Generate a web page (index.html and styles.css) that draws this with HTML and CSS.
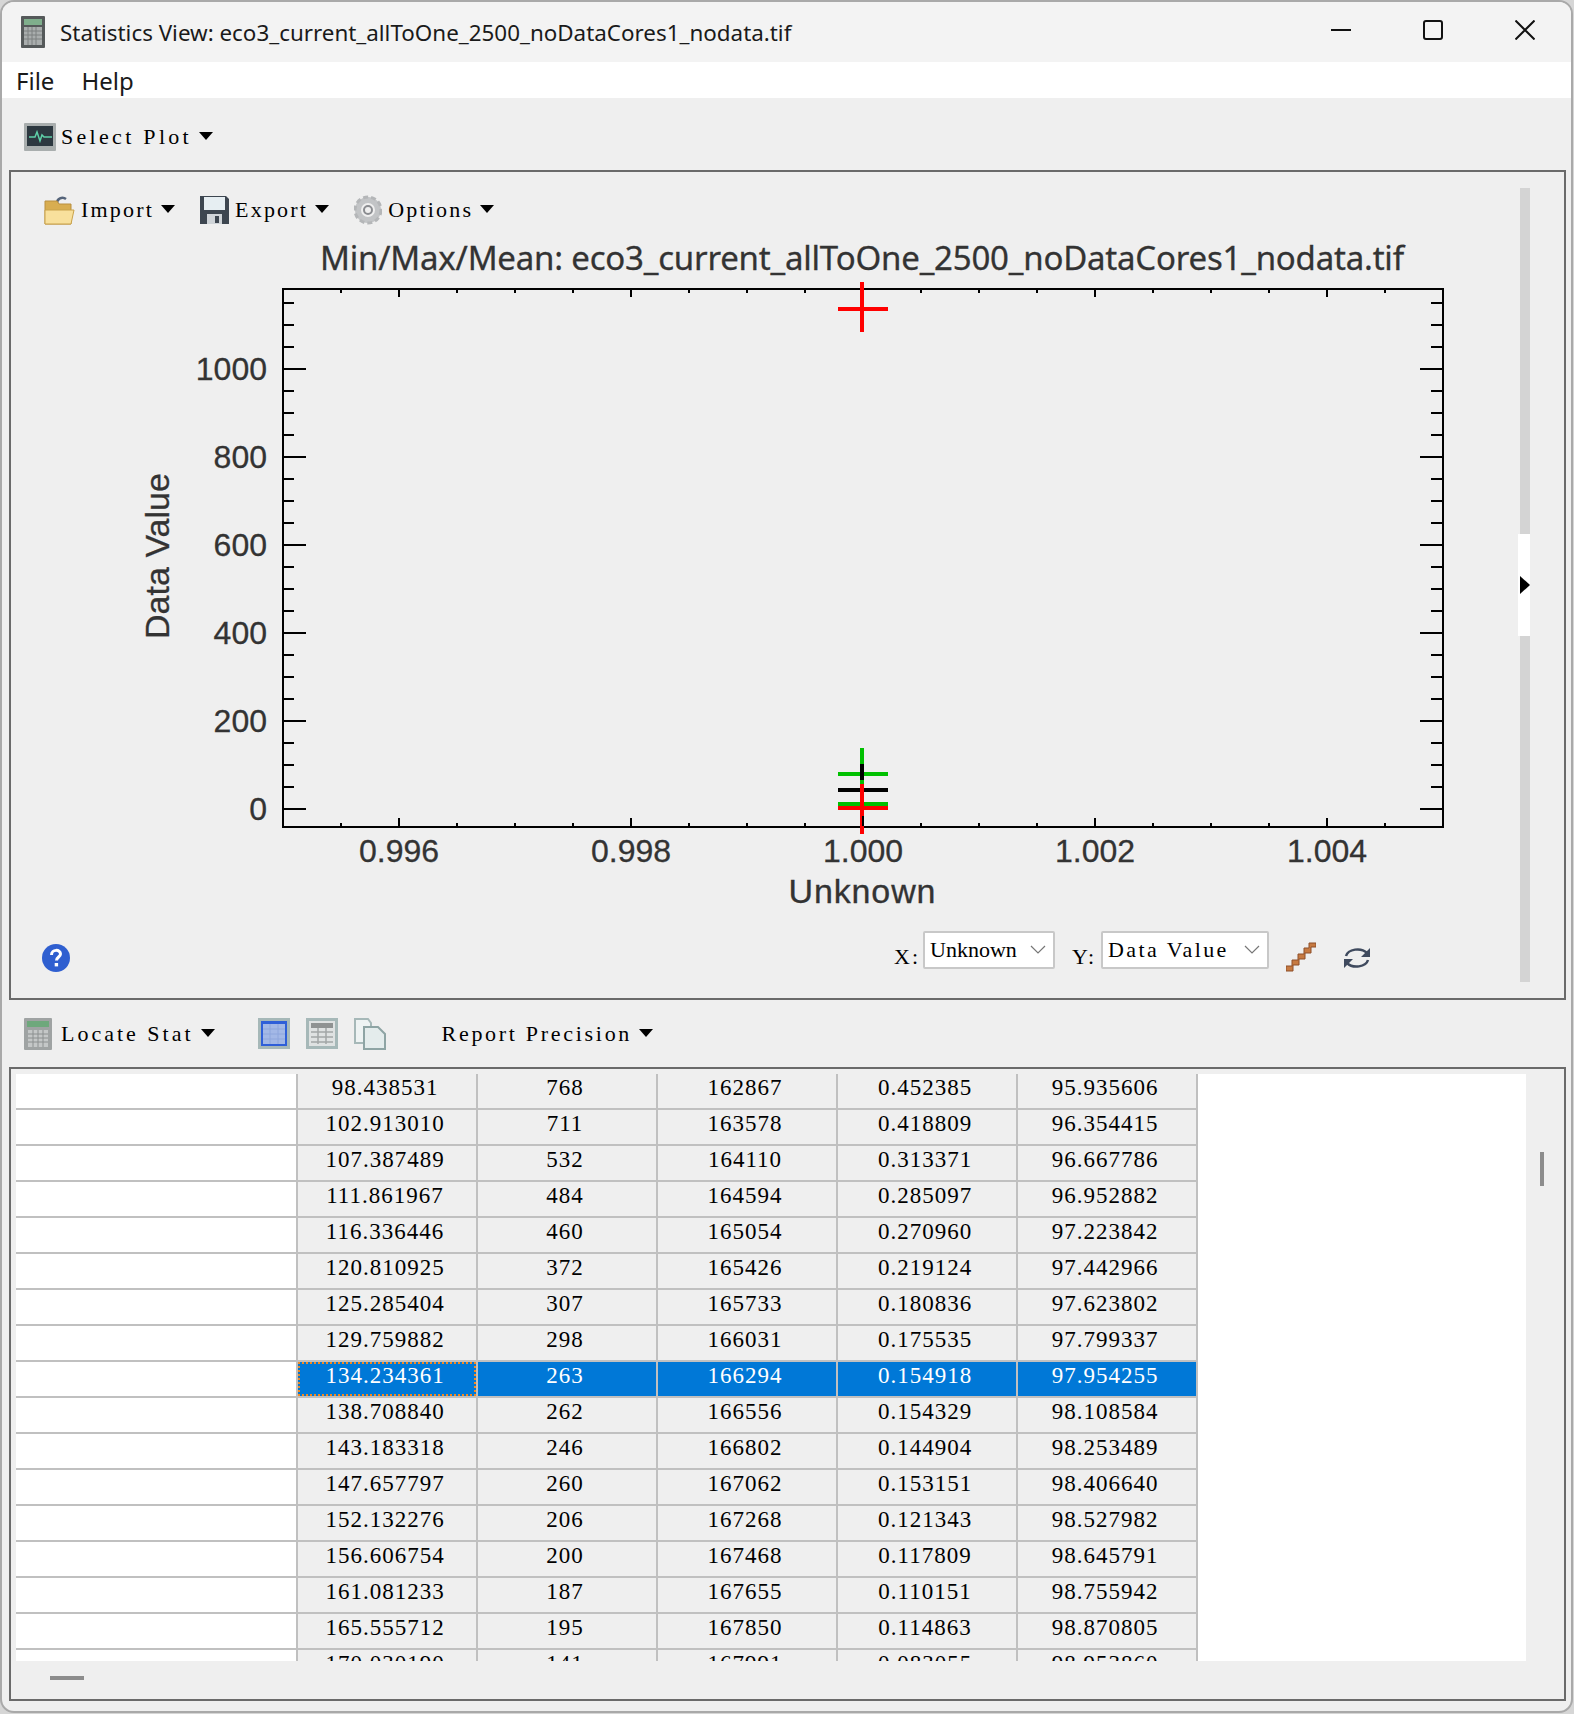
FILE: index.html
```html
<!DOCTYPE html>
<html lang="en">
<head>
    <meta charset="UTF-8">
    <title>Statistics View</title>
    <link rel="stylesheet" href="styles.css">
</head>
<body>
<div class="window">
    <div class="title-bar">
        <svg class="app-icon" width="24" height="32" viewBox="0 0 24 32">
            <rect x="0" y="0" width="24" height="32" rx="1" fill="#55595a"/>
            <rect x="3" y="3" width="18" height="6" fill="#7fae8c"/>
            <rect x="3" y="11" width="18" height="18" fill="#a9adad"/>
            <path d="M3 15h18M3 19h18M3 23h18M7 11v18M11 11v18M15 11v18" stroke="#7c8080" stroke-width="1"/>
        </svg>
        <span class="title-text">Statistics View: eco3_current_allToOne_2500_noDataCores1_nodata.tif</span>
        <div class="win-buttons">
            <svg width="20" height="20" viewBox="0 0 20 20"><path d="M0 10h20" stroke="#111" stroke-width="2"/></svg>
            <svg width="20" height="20" viewBox="0 0 20 20"><rect x="1" y="1" width="18" height="18" rx="2" fill="none" stroke="#111" stroke-width="2"/></svg>
            <svg width="20" height="20" viewBox="0 0 20 20"><path d="M0.5 0.5l19 19M19.5 0.5l-19 19" stroke="#111" stroke-width="2"/></svg>
        </div>
    </div>

    <div class="menu-bar">
        <span>File</span>
        <span>Help</span>
    </div>

    <div class="toolbar toolbar-top">
        <svg class="icon" width="32" height="28" viewBox="0 0 32 28">
            <rect x="0" y="0" width="32" height="28" rx="1" fill="#a9aeae"/>
            <rect x="3" y="3" width="26" height="20" fill="#2d3840"/>
            <path d="M5 14h6l2-5 3 9 2-6 2 2h8" fill="none" stroke="#5fd0a8" stroke-width="1.5"/>
        </svg>
        <span class="bitmap wide">Select Plot</span>
        <span class="caret"></span>
    </div>

    <div class="group plot-group">
        <div class="plot-main">
            <div class="plot-tools">
                <div class="tool">
                    <svg class="icon" width="31" height="30" viewBox="0 0 31 30">
                        <path d="M13 8c0-4 5-7 9-4" fill="none" stroke="#55647a" stroke-width="2.5"/>
                        <path d="M1 6h12l2 3h12v20H1z" fill="#d8ad50" stroke="#b98f3e"/>
                        <path d="M1 15h29l-3 14H1z" fill="#f8e09c" stroke="#c9a24a"/>
                    </svg>
                    <span class="bitmap">Import</span>
                    <span class="caret"></span>
                </div>
                <div class="tool">
                    <svg class="icon" width="29" height="30" viewBox="0 0 29 30">
                        <path d="M0 1h26l3 3v25H0z" fill="#3d4650"/>
                        <rect x="4" y="2" width="21" height="13" fill="#e6eef2"/>
                        <rect x="7" y="19" width="15" height="10" fill="#cfd4d8"/>
                        <rect x="15" y="21" width="4" height="7" fill="#3d4650"/>
                    </svg>
                    <span class="bitmap">Export</span>
                    <span class="caret"></span>
                </div>
                <div class="tool">
                    <svg class="icon" width="28" height="30" viewBox="0 0 28 30">
                        <circle cx="14" cy="15" r="10" fill="none" stroke="#c2c4c6" stroke-width="6"/>
                        <circle cx="14" cy="15" r="13" fill="none" stroke="#b4b6b8" stroke-width="3" stroke-dasharray="5 3"/>
                        <circle cx="14" cy="15" r="4" fill="none" stroke="#8a8c90" stroke-width="2"/>
                    </svg>
                    <span class="bitmap">Options</span>
                    <span class="caret"></span>
                </div>
            </div>

            <svg class="chart" width="1507" height="690" viewBox="11 232 1507 690">
                <text class="chart-title" x="320" y="270" textLength="1084">Min/Max/Mean: eco3_current_allToOne_2500_noDataCores1_nodata.tif</text>
                <rect x="283" y="289" width="1160" height="538" fill="none" stroke="#000" stroke-width="2"/>
                <!-- y axis ticks, left and right -->
                <path class="ticks" d="M283 809h23M283 721h23M283 633h23M283 545h23M283 457h23M283 369h23
                    M283 787h11M283 765h11M283 743h11M283 699h11M283 677h11M283 655h11M283 611h11M283 589h11M283 567h11
                    M283 523h11M283 501h11M283 479h11M283 435h11M283 413h11M283 391h11M283 347h11M283 325h11M283 303h11
                    M1443 809h-23M1443 721h-23M1443 633h-23M1443 545h-23M1443 457h-23M1443 369h-23
                    M1443 787h-12M1443 765h-12M1443 743h-12M1443 699h-12M1443 677h-12M1443 655h-12M1443 611h-12M1443 589h-12M1443 567h-12
                    M1443 523h-12M1443 501h-12M1443 479h-12M1443 435h-12M1443 413h-12M1443 391h-12M1443 347h-12M1443 325h-12M1443 303h-12"/>
                <!-- x axis ticks, top and bottom -->
                <path class="ticks" d="M399 289v8M631 289v8M863 289v8M1095 289v8M1327 289v8
                    M341 289v4M457 289v4M515 289v4M573 289v4M689 289v4M747 289v4M805 289v4M921 289v4M979 289v4M1037 289v4M1153 289v4M1211 289v4M1269 289v4M1385 289v4
                    M399 827v-9M631 827v-9M863 827v-9M1095 827v-9M1327 827v-9
                    M341 827v-4M457 827v-4M515 827v-4M573 827v-4M689 827v-4M747 827v-4M805 827v-4M921 827v-4M979 827v-4M1037 827v-4M1153 827v-4M1211 827v-4M1269 827v-4M1385 827v-4"/>

                <text class="tick-label end" x="267" y="380">1000</text>
                <text class="tick-label end" x="267" y="468">800</text>
                <text class="tick-label end" x="267" y="556">600</text>
                <text class="tick-label end" x="267" y="644">400</text>
                <text class="tick-label end" x="267" y="732">200</text>
                <text class="tick-label end" x="267" y="820">0</text>

                <text class="tick-label mid" x="399" y="862">0.996</text>
                <text class="tick-label mid" x="631" y="862">0.998</text>
                <text class="tick-label mid" x="863" y="862">1.000</text>
                <text class="tick-label mid" x="1095" y="862">1.002</text>
                <text class="tick-label mid" x="1327" y="862">1.004</text>

                <text class="axis-label mid" x="862" y="903" textLength="147">Unknown</text>
                <text class="axis-label mid" transform="translate(169 556) rotate(-90)" textLength="166">Data Value</text>

                <!-- min / max / mean markers -->
                <g shape-rendering="crispEdges">
                    <rect x="860" y="748" width="4" height="36" fill="#00c000"/>
                    <rect x="838" y="772" width="50" height="4" fill="#00c000"/>
                    <rect x="838" y="802" width="50" height="4" fill="#00c000"/>
                    <rect x="860" y="764" width="4" height="16" fill="#000"/>
                    <rect x="838" y="788" width="50" height="4" fill="#000"/>
                    <rect x="860" y="784" width="4" height="50" fill="#f00"/>
                    <rect x="838" y="806" width="50" height="4" fill="#f00"/>
                    <rect x="862" y="816" width="2" height="10" fill="#000"/>
                    <rect x="860" y="282" width="4" height="50" fill="#f00"/>
                    <rect x="838" y="307" width="50" height="4" fill="#f00"/>
                </g>
            </svg>

            <div class="plot-footer">
                <svg class="help-icon" width="28" height="28" viewBox="0 0 28 28">
                    <circle cx="14" cy="14" r="14" fill="#2f5fd0"/>
                    <path d="M9.5 11c0-6 9-6 9-1 0 3-4 3-4 6.5" fill="none" stroke="#fff" stroke-width="3"/>
                    <rect x="12.7" y="19" width="3.4" height="3.4" fill="#fff"/>
                </svg>
                <span class="bitmap axis-name x-name">X:</span>
                <div class="combo combo-x">
                    <span class="bitmap tight">Unknown</span>
                    <svg width="16" height="10" viewBox="0 0 16 10"><path d="M1 1l7 7 7-7" fill="none" stroke="#777" stroke-width="1.2"/></svg>
                </div>
                <span class="bitmap axis-name y-name">Y:</span>
                <div class="combo combo-y">
                    <span class="bitmap">Data Value</span>
                    <svg width="16" height="10" viewBox="0 0 16 10"><path d="M1 1l7 7 7-7" fill="none" stroke="#777" stroke-width="1.2"/></svg>
                </div>
                <svg class="steps-icon" width="30" height="30" viewBox="0 0 30 30">
                    <path d="M0 29v-5h6v-6h6v-6h6V6h5V1h7v4h-5v6h-6v6h-6v6H7v6z" fill="#c67a42" stroke="#8e4f28" stroke-width="1"/>
                </svg>
                <svg class="refresh-icon" width="28" height="22" viewBox="0 0 28 22">
                    <path d="M3 9C5 2 18 0 24 6M25 13C23 20 10 22 4 16" fill="none" stroke="#3f4a5e" stroke-width="2.5"/>
                    <path d="M27 1v9h-9zM1 21v-9h9z" fill="#3f4a5e"/>
                </svg>
            </div>
        </div>

        <div class="plot-side">
            <div class="side-track side-top"></div>
            <div class="side-handle"><span class="side-arrow"></span></div>
            <div class="side-track side-bottom"></div>
        </div>
    </div>

    <div class="toolbar toolbar-mid">
        <svg class="icon" width="28" height="32" viewBox="0 0 28 32">
            <rect x="0" y="0" width="28" height="32" rx="1" fill="#9fa3a3"/>
            <rect x="3" y="3" width="22" height="6" fill="#6ea87c"/>
            <rect x="4" y="12" width="20" height="17" fill="#c4c7c7"/>
            <path d="M4 16h20M4 20h20M4 24h20M9 12v17M14 12v17M19 12v17" stroke="#8c9090"/>
        </svg>
        <span class="bitmap wide">Locate Stat</span>
        <span class="caret"></span>
        <svg class="icon view-first" width="32" height="31" viewBox="0 0 32 31">
            <rect width="32" height="31" fill="#a6b8b8"/>
            <rect x="3" y="3" width="26" height="25" fill="#2f5fd8"/>
            <rect x="5" y="6" width="22" height="20" fill="#a3b8e6"/>
            <path d="M5 11h22M5 16h22M5 21h22M12 6v20M20 6v20" stroke="#8ea6dc"/>
        </svg>
        <svg class="icon" width="32" height="31" viewBox="0 0 32 31">
            <rect width="32" height="31" fill="#a6b8b8"/>
            <rect x="3" y="3" width="26" height="25" fill="#dfe2e2"/>
            <rect x="5" y="5" width="22" height="5" fill="#8f9292"/>
            <path d="M5 14h22M5 19h22M5 24h22M12 10v16M20 10v16" stroke="#a3a6a6" stroke-width="1.5"/>
        </svg>
        <svg class="icon" width="32" height="32" viewBox="0 0 32 32">
            <path d="M1 1h13l3 4v20H1z" fill="#eef3f3" stroke="#a6b8b8" stroke-width="2"/>
            <path d="M10 9h14l7 7v15H10z" fill="#e4ecec" stroke="#8ea4a4" stroke-width="2"/>
        </svg>
        <span class="bitmap report-label">Report Precision</span>
        <span class="caret"></span>
    </div>

    <div class="group table-group">
        <div class="table-row">
            <div class="table-view">
                <table class="stats">
                    <colgroup><col class="c-first"><col><col><col><col><col></colgroup>
                    <tr><td></td><td>98.438531</td><td>768</td><td>162867</td><td>0.452385</td><td>95.935606</td></tr>
                    <tr><td></td><td>102.913010</td><td>711</td><td>163578</td><td>0.418809</td><td>96.354415</td></tr>
                    <tr><td></td><td>107.387489</td><td>532</td><td>164110</td><td>0.313371</td><td>96.667786</td></tr>
                    <tr><td></td><td>111.861967</td><td>484</td><td>164594</td><td>0.285097</td><td>96.952882</td></tr>
                    <tr><td></td><td>116.336446</td><td>460</td><td>165054</td><td>0.270960</td><td>97.223842</td></tr>
                    <tr><td></td><td>120.810925</td><td>372</td><td>165426</td><td>0.219124</td><td>97.442966</td></tr>
                    <tr><td></td><td>125.285404</td><td>307</td><td>165733</td><td>0.180836</td><td>97.623802</td></tr>
                    <tr><td></td><td>129.759882</td><td>298</td><td>166031</td><td>0.175535</td><td>97.799337</td></tr>
                    <tr class="selected"><td></td><td class="focused"><div class="focus-cell">134.234361</div></td><td>263</td><td>166294</td><td>0.154918</td><td>97.954255</td></tr>
                    <tr><td></td><td>138.708840</td><td>262</td><td>166556</td><td>0.154329</td><td>98.108584</td></tr>
                    <tr><td></td><td>143.183318</td><td>246</td><td>166802</td><td>0.144904</td><td>98.253489</td></tr>
                    <tr><td></td><td>147.657797</td><td>260</td><td>167062</td><td>0.153151</td><td>98.406640</td></tr>
                    <tr><td></td><td>152.132276</td><td>206</td><td>167268</td><td>0.121343</td><td>98.527982</td></tr>
                    <tr><td></td><td>156.606754</td><td>200</td><td>167468</td><td>0.117809</td><td>98.645791</td></tr>
                    <tr><td></td><td>161.081233</td><td>187</td><td>167655</td><td>0.110151</td><td>98.755942</td></tr>
                    <tr><td></td><td>165.555712</td><td>195</td><td>167850</td><td>0.114863</td><td>98.870805</td></tr>
                    <tr><td></td><td>170.030190</td><td>141</td><td>167991</td><td>0.083055</td><td>98.953860</td></tr>
                </table>
            </div>
            <div class="v-slider"></div>
        </div>
        <div class="h-slider"></div>
    </div>
</div>
</body>
</html>
```

FILE: styles.css
```css
* {
    box-sizing: border-box;
}

body {
    margin: 0;
    background: #d6d6d6;
}

.window {
    width: 1573px;
    height: 1713px;
    background: #efefef;
    border: 2px solid #a9a9a9;
    border-radius: 14px;
    overflow: hidden;
}

.title-bar {
    height: 60px;
    background: #f3f3f3;
    display: flex;
    align-items: center;
    padding-left: 19px;
    font-family: "Noto Sans", sans-serif;
    font-size: 22.4px;
    color: #1a1a1a;
}

.app-icon {
    margin-right: 15px;
    flex: none;
}

.title-text {
    flex: 1;
    white-space: nowrap;
}

.win-buttons {
    display: flex;
    gap: 72px;
    margin-right: 36px;
    margin-top: -4px;
}

.menu-bar {
    height: 36px;
    background: #fff;
    display: flex;
    align-items: center;
    gap: 27px;
    padding-left: 14px;
    font-family: "Noto Sans", sans-serif;
    font-size: 24px;
    color: #1a1a1a;
}

/* the app draws these labels in a narrow bitmap serif */
.bitmap {
    font-family: "Liberation Serif", serif;
    font-size: 22px;
    letter-spacing: 2.2px;
    color: #000;
    white-space: nowrap;
}

.wide {
    letter-spacing: 3px;
}

.tight {
    letter-spacing: 0;
}

.caret {
    width: 0;
    height: 0;
    border-left: 7px solid transparent;
    border-right: 7px solid transparent;
    border-top: 8px solid #000;
    margin-left: 7px;
    margin-top: -2px;
}

.icon {
    flex: none;
}

.toolbar {
    display: flex;
    align-items: center;
}

.toolbar-top {
    height: 72px;
    padding: 6px 0 0 22px;
}

.toolbar-top .icon {
    margin-right: 5px;
}

.toolbar-top .bitmap {
    letter-spacing: 3.3px;
}

.group {
    margin: 0 5px 0 7px;
    border: 2px solid #6a6a6a;
}

.plot-group {
    height: 830px;
    display: flex;
}

.plot-main {
    width: 1507px;
}

.plot-tools {
    height: 60px;
    padding: 16px 0 0 33px;
    display: flex;
    align-items: center;
    gap: 25px;
}

.tool {
    display: flex;
    align-items: center;
}

.tool .icon {
    margin-right: 6px;
}

.chart {
    display: block;
}

.chart text {
    font-family: "Liberation Sans", sans-serif;
    fill: #333;
    stroke: #333;
    stroke-width: 0.3;
}

.chart .chart-title {
    font-family: "Noto Sans", sans-serif;
    font-size: 33px;
}

.tick-label {
    font-size: 32px;
}

.axis-label {
    font-size: 34px;
}

.end {
    text-anchor: end;
}

.mid {
    text-anchor: middle;
}

.ticks {
    fill: none;
    stroke: #000;
    stroke-width: 2;
}

.plot-footer {
    height: 76px;
    padding: 9px 0 0 31px;
    display: flex;
    align-items: flex-start;
}

.help-icon {
    margin-top: 13px;
}

.axis-name {
    margin-top: 13px;
    width: 24px;
}

.x-name {
    margin-left: 824px;
    margin-right: 5px;
}

.y-name {
    margin-left: 17px;
    margin-right: 5px;
}

.combo {
    height: 38px;
    background: #fff;
    border: 2px solid #c8c8c8;
    border-radius: 2px;
    padding: 0 7px 0 5px;
    display: flex;
    align-items: center;
    justify-content: space-between;
}

.combo-x {
    width: 132px;
}

.combo-y {
    width: 168px;
}

.combo-y .bitmap {
    letter-spacing: 2.4px;
}

.steps-icon {
    margin: 11px 0 0 17px;
}

.refresh-icon {
    margin: 16px 0 0 27px;
}

.plot-side {
    width: 12px;
    margin-top: 16px;
    display: flex;
    flex-direction: column;
    align-items: flex-end;
}

.side-track {
    width: 10px;
    background: #d4d4d4;
}

.side-top {
    height: 346px;
}

.side-bottom {
    height: 346px;
}

.side-handle {
    width: 12px;
    height: 102px;
    background: #fff;
    display: flex;
    align-items: center;
    padding-left: 2px;
}

.side-arrow {
    width: 0;
    height: 0;
    border-top: 9px solid transparent;
    border-bottom: 9px solid transparent;
    border-left: 10px solid #000;
}

.toolbar-mid {
    height: 67px;
    padding-left: 22px;
}

.toolbar-mid > .icon:first-child {
    margin-right: 9px;
}

.toolbar-mid > .icon {
    margin-right: 16px;
}

.view-first {
    margin-left: 43px;
}

.report-label {
    margin-left: 40px;
    letter-spacing: 2.7px;
}

.table-group {
    height: 634px;
    padding: 5px 0 0 5px;
}

.table-row {
    display: flex;
    align-items: flex-start;
}

.table-view {
    width: 1510px;
    height: 587px;
    background: #fff;
    overflow: hidden;
}

.stats {
    width: 1182px;
    table-layout: fixed;
    border-spacing: 0;
}

.c-first {
    width: 282px;
}

.stats tr {
    height: 36px;
}

.stats td {
    height: 36px;
    padding: 0 4px 6px 0;
    background: #efefef;
    border-right: 2px solid #c0c0c0;
    border-bottom: 2px solid #c0c0c0;
    text-align: center;
    font-family: "Liberation Serif", serif;
    font-size: 23px;
    line-height: 26px;
    letter-spacing: 1px;
    color: #000;
}

.stats td:first-child {
    background: #fff;
}

.stats .selected td:not(:first-child) {
    background: #0078d7;
    color: #fff;
}

.stats td.focused {
    padding: 0;
}

.focus-cell {
    height: 34px;
    padding-right: 4px;
    line-height: 24px;
    border: 2px dotted #f58a1f;
}

.v-slider {
    width: 4px;
    height: 34px;
    margin: 78px 0 0 14px;
    background: #8c8c8c;
}

.h-slider {
    width: 34px;
    height: 4px;
    margin: 15px 0 0 34px;
    background: #8c8c8c;
}
```
